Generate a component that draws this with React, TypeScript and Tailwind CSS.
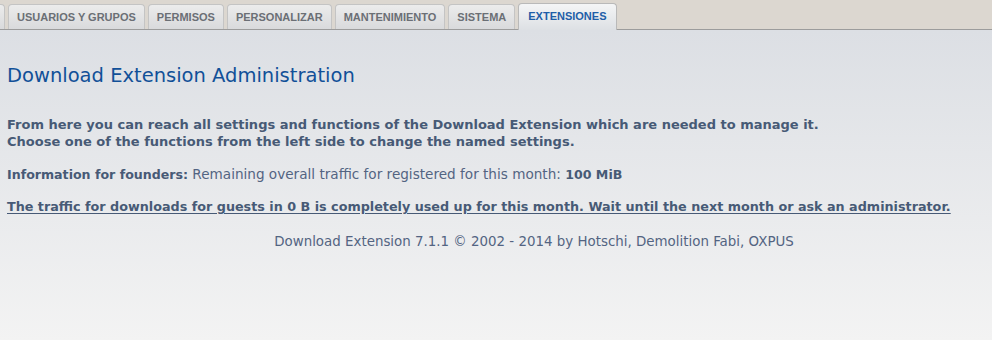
const TABS = ['USUARIOS Y GRUPOS', 'PERMISOS', 'PERSONALIZAR', 'MANTENIMIENTO', 'SISTEMA'];

function Tab({ label, active }: { label: string; active?: boolean }) {
  return (
    <div
      className={
        active
          ? 'relative -mb-px flex h-[27px] items-center rounded-t-[4px] border border-b-0 border-[#b9b9b9] bg-gradient-to-b from-[#f4f5f6] to-[#dde0e4] px-[9px] pb-px text-[#1f5ea8]'
          : 'flex h-[25px] items-center rounded-t-[4px] border border-b-0 border-[#c4c4c4] bg-gradient-to-b from-[#ececec] to-[#d9dadc] px-[8px] text-[#6b6f75]'
      }
    >
      <span className="text-[11px] font-bold">{label}</span>
    </div>
  );
}

export default function App() {
  return (
    <div className="h-[340px] w-[992px] overflow-hidden font-['Liberation_Sans',Arial,sans-serif]">
      {/* tab strip */}
      <div className="flex h-[30px] items-end gap-[3px] border-b border-[#9c9c9c] bg-[#dcd7d0]">
        <div className="h-[25px] w-[5px] rounded-tr-[4px] border border-b-0 border-l-0 border-[#c4c4c4] bg-gradient-to-b from-[#ececec] to-[#d9dadc]" />
        {TABS.map((t) => (
          <Tab key={t} label={t} />
        ))}
        <Tab label="EXTENSIONES" active />
      </div>

      {/* content */}
      <div className="h-[310px] bg-gradient-to-b from-[#dcdfe4] to-[#f3f3f3] px-[7px] pt-[34px] font-['DejaVu_Sans',Verdana,sans-serif]">
        <h1 className="text-[19.5px] leading-[24px] text-[#115098]">Download Extension Administration</h1>

        <p className="mt-[28px] text-[13px] font-bold leading-[17px] text-[#475a76]">
          From here you can reach all settings and functions of the Download Extension which are needed to manage it.
          <br />
          Choose one of the functions from the left side to change the named settings.
        </p>

        <p className="mt-[16px] text-[13.6px] leading-[17px] text-[#536482]">
          <b className="text-[12.6px] text-[#475a76]">Information for founders:</b> Remaining overall traffic for
          registered for this month: <b className="text-[12.6px] text-[#475a76]">100 MiB</b>
        </p>

        <p className="mt-[15px] text-[12.75px] font-bold leading-[17px] text-[#475a76] underline underline-offset-2">
          The traffic for downloads for guests in 0 B is completely used up for this month. Wait until the next month or
          ask an administrator.
        </p>

        <p className="mt-[18px] pl-[76px] text-center text-[13.4px] leading-[17px] text-[#536482]">
          Download Extension 7.1.1 © 2002 - 2014 by Hotschi, Demolition Fabi, OXPUS
        </p>
      </div>
    </div>
  );
}
